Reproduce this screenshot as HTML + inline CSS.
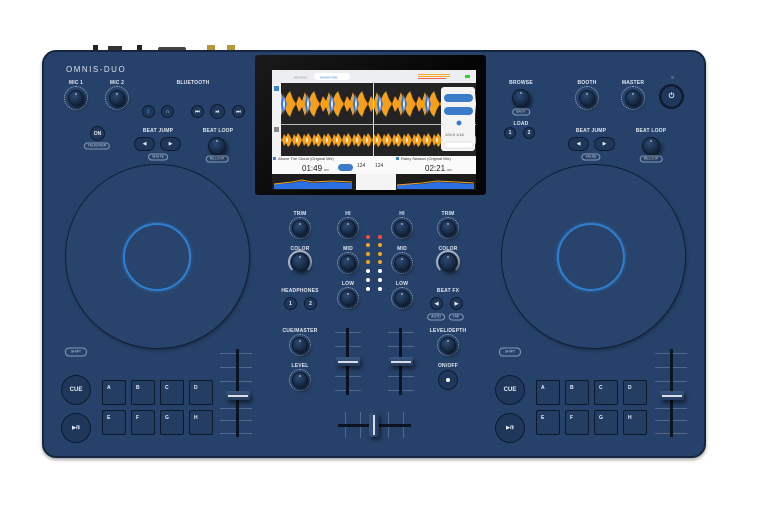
<!DOCTYPE html>
<html><head><meta charset="utf-8"><style>
*{margin:0;padding:0;box-sizing:border-box}
body{width:764px;height:505px;background:#fff;position:relative;overflow:hidden;font-family:"Liberation Sans",sans-serif}
.a{position:absolute}
.body{left:42px;top:50px;width:664px;height:408px;background:#27426a;border-radius:14px;border:2px solid #16263f;box-shadow:0 2px 3px rgba(0,0,0,.35)}
.lbl{position:absolute;color:#dfe6f0;font-size:5px;font-weight:bold;transform:translateX(-50%);white-space:nowrap;letter-spacing:.2px}
.sm{position:absolute;color:#c9d3e2;font-size:3.5px;transform:translate(-50%,-50%);border:1px solid #8a9ab5;border-radius:4px;padding:0 3px;white-space:nowrap;line-height:5px}
.k{position:absolute;border-radius:50%;background:radial-gradient(circle at 40% 35%,#2c4a74,#14253e 70%);box-shadow:2px 3px 4px rgba(0,0,0,.55);border:1px solid #0d1a2e}
.k::after{content:"";position:absolute;left:50%;top:2px;width:1px;height:2px;background:#ddd;transform:translateX(-50%)}
.kd{position:absolute;border-radius:50%;border:1px dotted #9fb0c8}
.b{position:absolute;border-radius:50%;border:1.5px solid #0d1a2e;background:#1f375a;color:#e8eef6;font-size:5px;font-weight:bold;display:flex;align-items:center;justify-content:center}
.r{position:absolute;border-radius:7px;border:1.5px solid #0d1a2e;background:#1f375a;color:#e8eef6;font-size:5px;display:flex;align-items:center;justify-content:center}
.pad{position:absolute;width:24px;height:25px;background:#233d63;border:1.5px solid #0d1829;border-radius:2px;color:#e8eef6;font-size:5px;font-weight:bold;padding:4px 0 0 4px}
.jog{position:absolute;border-radius:50%;background:radial-gradient(circle,#28446c 0,#28446c 80%,#1f3758 82%,#1a3050 90%,#15284a 96%,#0a1424 100%);box-shadow:0 0 0 1px #0f1d33,1px 2px 4px rgba(0,0,0,.4)}
.ring{position:absolute;border-radius:50%;border:2.5px solid #2f7fd0;box-shadow:0 0 3px #2f74c0}
.trk{position:absolute;width:3px;background:#0c1422}
.tick{position:absolute;height:1px;background:#52698c}
.cap{position:absolute;height:9px;background:linear-gradient(#3a5680,#22395c);border-radius:2px;box-shadow:2px 3px 4px rgba(0,0,0,.5)}
.cap::after{content:"";position:absolute;left:2px;right:2px;top:3.5px;height:2px;background:#d8dde5}
.led{position:absolute;width:4px;height:4px;border-radius:50%}
</style></head><body>
<div class="a" style="left:93px;top:45px;width:5px;height:6px;background:#222"></div>
<div class="a" style="left:108px;top:46px;width:14px;height:5px;background:#333"></div>
<div class="a" style="left:137px;top:45px;width:5px;height:6px;background:#222"></div>
<div class="a" style="left:158px;top:47px;width:28px;height:4px;background:#444;border-radius:2px"></div>
<div class="a" style="left:207px;top:45px;width:8px;height:6px;background:#b8963a"></div>
<div class="a" style="left:227px;top:45px;width:8px;height:6px;background:#b8963a"></div>
<div class="body a"></div>
<div class="a" style="left:66px;top:65px;color:#d8e0ec;font-size:8px;letter-spacing:1.5px">OMNIS-DUO</div>

<div class="lbl" style="left:76px;top:80px">MIC 1</div><div class="kd" style="left:64px;top:86px;width:24px;height:24px"></div><div class="k" style="left:68px;top:90px;width:16px;height:16px"></div>
<div class="lbl" style="left:117px;top:80px">MIC 2</div><div class="kd" style="left:105px;top:86px;width:24px;height:24px"></div><div class="k" style="left:109px;top:90px;width:16px;height:16px"></div>
<div class="lbl" style="left:193px;top:80px">BLUETOOTH</div>
<div class="b" style="left:142px;top:105px;width:13px;height:13px;color:#3b8ae0">ᛒ</div>
<div class="b" style="left:161px;top:105px;width:13px;height:13px">∩</div>
<div class="b" style="left:191px;top:105px;width:13px;height:13px">⏮</div>
<div class="b" style="left:210px;top:104px;width:15px;height:15px">⏯</div>
<div class="b" style="left:232px;top:105px;width:13px;height:13px">⏭</div>
<div class="b" style="left:90px;top:126px;width:15px;height:15px">ON</div><div class="sm" style="left:97px;top:146px">TALKOVER</div>
<div class="lbl" style="left:158px;top:128px">BEAT JUMP</div>
<div class="r" style="left:134px;top:137px;width:21px;height:14px">◀</div><div class="r" style="left:160px;top:137px;width:21px;height:14px">▶</div>
<div class="sm" style="left:158px;top:157px">SHUTE</div>
<div class="lbl" style="left:218px;top:128px">BEAT LOOP</div><div class="k" style="left:208px;top:137px;width:18px;height:18px"></div><div class="sm" style="left:217px;top:159px">RELOOP</div>

<div class="jog" style="left:66px;top:165px;width:183px;height:183px"></div>
<div class="ring" style="left:123px;top:223px;width:68px;height:68px"></div>
<div class="jog" style="left:502px;top:165px;width:183px;height:183px"></div>
<div class="ring" style="left:557px;top:223px;width:68px;height:68px"></div>

<div class="sm" style="left:76px;top:352px;padding:1px 5px">SHIFT</div>
<div class="b" style="left:61px;top:375px;width:30px;height:30px;font-size:6px">CUE</div>
<div class="b" style="left:61px;top:413px;width:30px;height:30px">▶/Ⅱ</div>
<div class="pad" style="left:102px;top:380px">A</div><div class="pad" style="left:131px;top:380px">B</div><div class="pad" style="left:160px;top:380px">C</div><div class="pad" style="left:189px;top:380px">D</div>
<div class="pad" style="left:102px;top:410px">E</div><div class="pad" style="left:131px;top:410px">F</div><div class="pad" style="left:160px;top:410px">G</div><div class="pad" style="left:189px;top:410px">H</div>
<div class="tick" style="left:220px;top:353px;width:32px"></div><div class="tick" style="left:220px;top:367px;width:32px"></div><div class="tick" style="left:220px;top:381px;width:32px"></div><div class="tick" style="left:220px;top:408px;width:32px"></div><div class="tick" style="left:220px;top:420px;width:32px"></div><div class="tick" style="left:220px;top:433px;width:32px"></div>
<div class="trk" style="left:236px;top:349px;height:88px"></div><div class="cap" style="left:226px;top:391px;width:24px"></div>

<div class="lbl" style="left:521px;top:80px">BROWSE</div><div class="k" style="left:512px;top:89px;width:18px;height:18px"></div><div class="sm" style="left:521px;top:112px">BACK</div>
<div class="lbl" style="left:521px;top:121px">LOAD</div>
<div class="b" style="left:504px;top:127px;width:12px;height:12px">1</div><div class="b" style="left:523px;top:127px;width:12px;height:12px">2</div>
<div class="lbl" style="left:587px;top:80px">BOOTH</div><div class="kd" style="left:575px;top:86px;width:24px;height:24px"></div><div class="k" style="left:579px;top:90px;width:16px;height:16px"></div>
<div class="lbl" style="left:633px;top:80px">MASTER</div><div class="kd" style="left:621px;top:86px;width:24px;height:24px"></div><div class="k" style="left:625px;top:90px;width:16px;height:16px"></div>
<div class="a" style="left:671px;top:76px;width:3px;height:3px;border-radius:50%;background:#55667f"></div>
<div class="b" style="left:659px;top:84px;width:25px;height:25px;box-shadow:0 0 0 1.5px #0f1c30 inset,0 0 0 3px #22395c inset;font-size:7px">⏻</div>
<div class="lbl" style="left:591px;top:128px">BEAT JUMP</div>
<div class="r" style="left:568px;top:137px;width:21px;height:14px">◀</div><div class="r" style="left:594px;top:137px;width:21px;height:14px">▶</div>
<div class="sm" style="left:591px;top:157px">VALUE</div>
<div class="lbl" style="left:651px;top:128px">BEAT LOOP</div><div class="k" style="left:642px;top:137px;width:18px;height:18px"></div><div class="sm" style="left:651px;top:159px">RELOOP</div>

<div class="sm" style="left:510px;top:352px;padding:1px 5px">SHIFT</div>
<div class="b" style="left:495px;top:375px;width:30px;height:30px;font-size:6px">CUE</div>
<div class="b" style="left:495px;top:413px;width:30px;height:30px">▶/Ⅱ</div>
<div class="pad" style="left:536px;top:380px">A</div><div class="pad" style="left:565px;top:380px">B</div><div class="pad" style="left:594px;top:380px">C</div><div class="pad" style="left:623px;top:380px">D</div>
<div class="pad" style="left:536px;top:410px">E</div><div class="pad" style="left:565px;top:410px">F</div><div class="pad" style="left:594px;top:410px">G</div><div class="pad" style="left:623px;top:410px">H</div>
<div class="tick" style="left:655px;top:353px;width:32px"></div><div class="tick" style="left:655px;top:367px;width:32px"></div><div class="tick" style="left:655px;top:381px;width:32px"></div><div class="tick" style="left:655px;top:408px;width:32px"></div><div class="tick" style="left:655px;top:420px;width:32px"></div><div class="tick" style="left:655px;top:433px;width:32px"></div>
<div class="trk" style="left:670px;top:349px;height:88px"></div><div class="cap" style="left:660px;top:391px;width:24px"></div>

<div class="lbl" style="left:300px;top:211px">TRIM</div><div class="kd" style="left:289px;top:217px;width:22px;height:22px"></div><div class="k" style="left:292px;top:220px;width:16px;height:16px"></div>
<div class="lbl" style="left:348px;top:211px">HI</div><div class="kd" style="left:337px;top:217px;width:22px;height:22px"></div><div class="k" style="left:340px;top:220px;width:16px;height:16px"></div>
<div class="lbl" style="left:402px;top:211px">HI</div><div class="kd" style="left:391px;top:217px;width:22px;height:22px"></div><div class="k" style="left:394px;top:220px;width:16px;height:16px"></div>
<div class="lbl" style="left:448px;top:211px">TRIM</div><div class="kd" style="left:437px;top:217px;width:22px;height:22px"></div><div class="k" style="left:440px;top:220px;width:16px;height:16px"></div>
<div class="lbl" style="left:300px;top:246px">COLOR</div><div class="a" style="left:288px;top:250px;width:24px;height:24px;border-radius:50%;border:2px solid #aab4c2;border-bottom-color:transparent"></div><div class="k" style="left:291px;top:253px;width:18px;height:18px"></div>
<div class="lbl" style="left:448px;top:246px">COLOR</div><div class="a" style="left:436px;top:250px;width:24px;height:24px;border-radius:50%;border:2px solid #aab4c2;border-bottom-color:transparent"></div><div class="k" style="left:439px;top:253px;width:18px;height:18px"></div>
<div class="lbl" style="left:348px;top:246px">MID</div><div class="kd" style="left:337px;top:252px;width:22px;height:22px"></div><div class="k" style="left:340px;top:255px;width:16px;height:16px"></div>
<div class="lbl" style="left:402px;top:246px">MID</div><div class="kd" style="left:391px;top:252px;width:22px;height:22px"></div><div class="k" style="left:394px;top:255px;width:16px;height:16px"></div>
<div class="lbl" style="left:348px;top:281px">LOW</div><div class="kd" style="left:337px;top:287px;width:22px;height:22px"></div><div class="k" style="left:340px;top:290px;width:16px;height:16px"></div>
<div class="lbl" style="left:402px;top:281px">LOW</div><div class="kd" style="left:391px;top:287px;width:22px;height:22px"></div><div class="k" style="left:394px;top:290px;width:16px;height:16px"></div>
<div class="led" style="left:366px;top:235px;background:#ff4a3a"></div><div class="led" style="left:378px;top:235px;background:#ff4a3a"></div>
<div class="led" style="left:366px;top:243px;background:#f5a623"></div><div class="led" style="left:378px;top:243px;background:#f5a623"></div>
<div class="led" style="left:366px;top:252px;background:#f5a623"></div><div class="led" style="left:378px;top:252px;background:#f5a623"></div>
<div class="led" style="left:366px;top:260px;background:#f5a623"></div><div class="led" style="left:378px;top:260px;background:#f5a623"></div>
<div class="led" style="left:366px;top:269px;background:#fff"></div><div class="led" style="left:378px;top:269px;background:#fff"></div>
<div class="led" style="left:366px;top:278px;background:#fff"></div><div class="led" style="left:378px;top:278px;background:#fff"></div>
<div class="led" style="left:366px;top:287px;background:#fff"></div><div class="led" style="left:378px;top:287px;background:#fff"></div>
<div class="lbl" style="left:300px;top:288px">HEADPHONES</div>
<div class="b" style="left:284px;top:297px;width:13px;height:13px">1</div><div class="b" style="left:304px;top:297px;width:13px;height:13px">2</div>
<div class="lbl" style="left:448px;top:288px">BEAT FX</div>
<div class="b" style="left:430px;top:297px;width:13px;height:13px">◀</div><div class="b" style="left:450px;top:297px;width:13px;height:13px">▶</div>
<div class="sm" style="left:436px;top:317px">AUTO</div><div class="sm" style="left:456px;top:317px">TAP</div>
<div class="lbl" style="left:300px;top:328px">CUE/MASTER</div><div class="kd" style="left:289px;top:334px;width:22px;height:22px"></div><div class="k" style="left:292px;top:337px;width:16px;height:16px"></div>
<div class="lbl" style="left:300px;top:363px">LEVEL</div><div class="kd" style="left:289px;top:369px;width:22px;height:22px"></div><div class="k" style="left:292px;top:372px;width:16px;height:16px"></div>
<div class="lbl" style="left:448px;top:328px">LEVEL/DEPTH</div><div class="kd" style="left:437px;top:334px;width:22px;height:22px"></div><div class="k" style="left:440px;top:337px;width:16px;height:16px"></div>
<div class="lbl" style="left:448px;top:363px">ON/OFF</div><div class="b" style="left:438px;top:370px;width:20px;height:20px"><span style="width:4px;height:4px;border-radius:50%;background:#fff"></span></div>
<div class="tick" style="left:335px;top:332px;width:26px"></div><div class="tick" style="left:335px;top:346px;width:26px"></div><div class="tick" style="left:335px;top:376px;width:26px"></div><div class="tick" style="left:335px;top:390px;width:26px"></div>
<div class="tick" style="left:388px;top:332px;width:26px"></div><div class="tick" style="left:388px;top:346px;width:26px"></div><div class="tick" style="left:388px;top:376px;width:26px"></div><div class="tick" style="left:388px;top:390px;width:26px"></div>
<div class="trk" style="left:346px;top:328px;height:67px"></div><div class="trk" style="left:399px;top:328px;height:67px"></div>
<div class="cap" style="left:336px;top:357px;width:24px"></div><div class="cap" style="left:389px;top:357px;width:24px"></div>
<div class="a" style="left:345px;top:412px;width:1px;height:26px;background:#52698c"></div><div class="a" style="left:360px;top:412px;width:1px;height:26px;background:#52698c"></div><div class="a" style="left:388px;top:412px;width:1px;height:26px;background:#52698c"></div><div class="a" style="left:403px;top:412px;width:1px;height:26px;background:#52698c"></div>
<div class="a" style="left:338px;top:424px;width:73px;height:3px;background:#0c1422"></div>
<div class="a" style="left:369px;top:413px;width:10px;height:24px;border-radius:3px;background:linear-gradient(90deg,#3a5680,#22395c);box-shadow:2px 3px 4px rgba(0,0,0,.5)"><div style="position:absolute;left:4px;top:2px;width:2px;height:20px;background:#d8dde5"></div></div>

<div class="a" style="left:255px;top:55px;width:231px;height:140px;background:linear-gradient(135deg,#1a1a1a,#050505 60%);border-radius:3px"></div>
<div class="a" style="left:272px;top:70px;width:204px;height:120px;background:#222;overflow:hidden">
<svg width="204" height="120" viewBox="0 0 204 120">
<defs>
<pattern id="w1" width="24" height="40" patternUnits="userSpaceOnUse" y="14">
<path d="M0 20 L3 12 L6 17 L9 8 L12 18 L15 11 L18 7 L21 15 L24 20 L21 25 L18 33 L15 29 L12 22 L9 32 L6 23 L3 28 Z" fill="#f5a01a"/>
<path d="M9 20 L11 10 L13 14 L15 20 L13 26 L11 30 Z" fill="#2c6fe0"/>
<path d="M11 20 L12 13 L13 20 L12 27Z" fill="#fff"/>
</pattern>
<pattern id="w2" width="10" height="30" patternUnits="userSpaceOnUse" y="55">
<path d="M0 15 L2 9 L4 12 L6 8 L8 11 L10 15 L8 20 L6 22 L4 18 L2 21Z" fill="#f5a01a"/>
<path d="M4 15 L5 12 L6 15 L5 18Z" fill="#fff"/>
</pattern>
</defs>
<rect x="0" y="0" width="204" height="13" fill="#eceef1"/>
<rect x="42" y="3" width="36" height="7" rx="3.5" fill="#fff"/>
<text x="22" y="8.5" font-size="3" fill="#999" font-family="Liberation Sans">BROWSE</text>
<text x="48" y="8.5" font-size="3" fill="#3a86d6" font-family="Liberation Sans">WAVEFORM</text>
<rect x="146" y="4" width="32" height="1" fill="#f5a623"/><rect x="146" y="6" width="32" height="1" fill="#f5a623"/><rect x="146" y="8" width="28" height="1" fill="#e65"/>
<rect x="193" y="5" width="5" height="3" fill="#3c3"/>
<rect x="0" y="13" width="204" height="73" fill="#232323"/>
<rect x="8" y="14" width="196" height="40" fill="url(#w1)"/>
<rect x="8" y="58" width="196" height="24" fill="url(#w2)"/>
<rect x="0" y="54" width="204" height="1" fill="#bbb"/>
<rect x="101" y="13" width="1" height="73" fill="#ddd"/>
<rect x="0" y="13" width="9" height="73" fill="#f2f2f2"/>
<rect x="2" y="16" width="5" height="5" fill="#3a86d6"/><rect x="2" y="57" width="5" height="5" fill="#888"/>
<rect x="169" y="17" width="34" height="64" rx="3" fill="#f4f4f4"/>
<rect x="172" y="24" width="29" height="8" rx="4" fill="#3a7cc8"/><rect x="172" y="37" width="29" height="8" rx="4" fill="#3a7cc8"/>
<circle cx="187" cy="53" r="2.5" fill="#3a7cc8"/>
<text x="173" y="66" font-size="4" fill="#555" font-family="Liberation Sans">124.0  1/16</text>
<rect x="172" y="72" width="29" height="6" rx="3" fill="#fff" stroke="#ccc" stroke-width=".5"/>
<rect x="0" y="86" width="204" height="18" fill="#fafafa"/>
<rect x="1" y="87" width="3" height="3" fill="#3a86d6"/><text x="6" y="90" font-size="4" fill="#333" font-family="Liberation Sans">Above The Cloud (Original Mix)</text>
<rect x="124" y="87" width="3" height="3" fill="#3a86d6"/><text x="129" y="90" font-size="4" fill="#333" font-family="Liberation Sans">Rainy Season (Original Mix)</text>
<text x="30" y="101" font-size="8" fill="#222" font-family="Liberation Sans">01:49</text><text x="51" y="101" font-size="3" fill="#555" font-family="Liberation Sans">.000</text>
<rect x="66" y="94" width="15" height="7" rx="3.5" fill="#3a7cc8"/>
<text x="85" y="97" font-size="5" fill="#333" font-family="Liberation Sans">124</text><text x="103" y="97" font-size="5" fill="#333" font-family="Liberation Sans">124</text>
<text x="153" y="101" font-size="8" fill="#222" font-family="Liberation Sans">02:21</text><text x="174" y="101" font-size="3" fill="#555" font-family="Liberation Sans">.000</text>
<rect x="0" y="104" width="204" height="16" fill="#1c1c1c"/>
<path d="M2 119 L2 114 L20 113 L30 111 L40 113 L60 112 L80 113 L80 119Z" fill="#2c6fe0"/><path d="M2 114 L20 112 L30 110 L40 112 L60 111 L80 112" stroke="#f5a01a" fill="none"/>
<path d="M125 119 L125 115 L150 114 L165 112 L185 113 L202 114 L202 119Z" fill="#2c6fe0"/><path d="M125 115 L150 113 L165 111 L185 112 L202 113" stroke="#f5a01a" fill="none"/>
<rect x="84" y="104" width="40" height="16" fill="#f4f4f4"/>
</svg></div>
</body></html>
